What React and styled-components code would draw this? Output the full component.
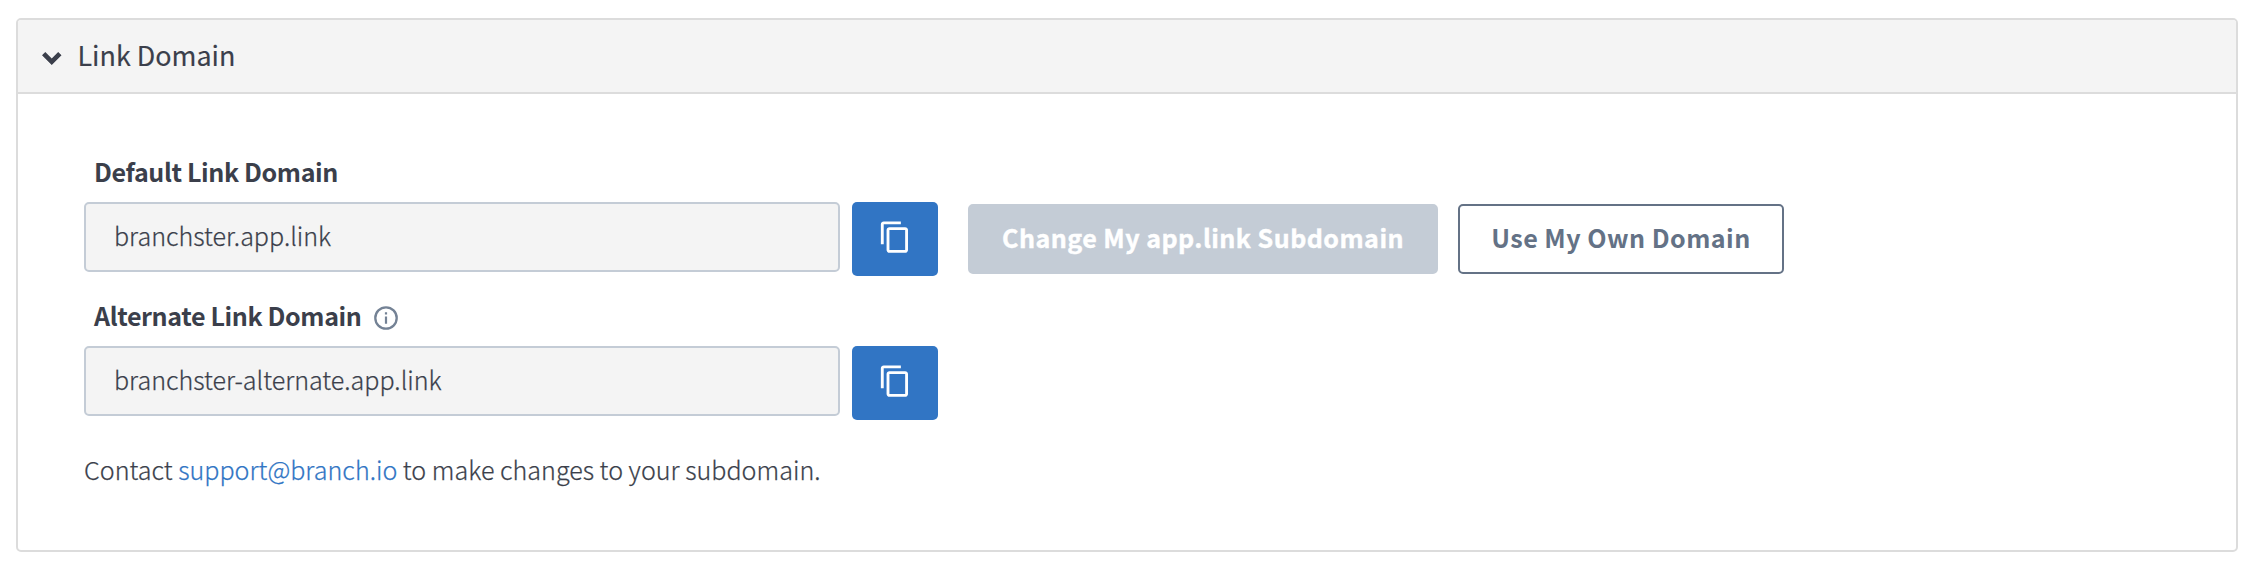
import React from 'react';
import styled, { createGlobalStyle } from 'styled-components';

const GlobalStyle = createGlobalStyle`
  *, *::before, *::after { box-sizing: border-box; }
  body {
    margin: 0;
    background: #fff;
    color: #3b3f4b;
    font-family: "Noto Sans CJK SC", "Noto Sans", sans-serif;
    font-size: 25.07px;
  }
`;

const Page = styled.main`
  padding: 18px 20px 18px 16px;
`;

const Panel = styled.section`
  height: 534px;
  border: 2px solid #dcdcdc;
  border-radius: 5px;
  overflow: hidden;
`;

const PanelHeader = styled.header`
  display: flex;
  align-items: center;
  height: 74px;
  padding: 0 24px;
  border-bottom: 2px solid #dcdcdc;
  background: #f4f4f4;
`;

const Chevron = styled.svg`
  flex: none;
  width: 19.5px;
  height: 13px;
  margin: 5px 16px 0 0;
`;

const PanelTitle = styled.h2`
  margin: 0;
  padding-bottom: 3px;
  font-size: 26.9px;
  font-weight: 400;
  line-height: 40px;
  -webkit-text-stroke: 0.15px currentColor;
`;

const PanelBody = styled.div`
  padding: 46px 66px 0;
`;

const Field = styled.div`
  & + & { padding-top: 8px; }
`;

const FieldLabel = styled.div`
  display: flex;
  align-items: center;
  height: 62px;
  padding-left: 10px;
  font-weight: 700;
  letter-spacing: -0.38px;
  white-space: nowrap;
`;

const InfoIcon = styled.svg`
  flex: none;
  width: 24px;
  height: 24px;
  margin: 6px 0 0 12px;
`;

const FieldRow = styled.div`
  display: flex;
  align-items: flex-start;
  height: 74px;
`;

const DomainBox = styled.div`
  display: flex;
  align-items: center;
  width: 756px;
  height: 70px;
  padding: 0 28px 4px;
  border: 2px solid #c4ccd6;
  border-radius: 5px;
  background: #f4f4f4;
  font-weight: 300;
  -webkit-text-stroke: 0.25px currentColor;
`;

const CopyButton = styled.button`
  display: flex;
  align-items: center;
  justify-content: center;
  width: 86px;
  height: 74px;
  margin-left: 12px;
  padding: 0 0 4px;
  border: 0;
  border-radius: 5px;
  background: #3175c4;
`;

const Actions = styled.div`
  display: flex;
  gap: 20px;
  margin: 2px 0 0 30px;
`;

const ActionButton = styled.button`
  width: ${(p) => p.$width}px;
  height: 70px;
  padding: 0 0 4px;
  border: 2px solid ${(p) => (p.$muted ? '#c4ccd6' : '#647286')};
  border-radius: 5px;
  background: ${(p) => (p.$muted ? '#c4ccd6' : '#fff')};
  color: ${(p) => (p.$muted ? '#fff' : '#647286')};
  font: inherit;
  font-weight: 700;
  letter-spacing: 0.46px;
  white-space: nowrap;
  -webkit-text-stroke: ${(p) => (p.$muted ? '0.4px' : '0')} currentColor;
`;

const Note = styled.p`
  margin: 29px 0 0;
  font-weight: 300;
  line-height: 40px;
  letter-spacing: 0.02px;
  -webkit-text-stroke: 0.25px currentColor;
`;

const MailLink = styled.a`
  color: #3175c4;
  text-decoration: none;
`;

function CopyIcon() {
  return (
    <svg width="34.3" height="34.3" viewBox="0 0 24 24" fill="#fff" aria-hidden="true">
      <path d="M16 1H4c-1.1 0-2 .9-2 2v14h2V3h12V1zm3 4H8c-1.1 0-2 .9-2 2v14c0 1.1.9 2 2 2h11c1.1 0 2-.9 2-2V7c0-1.1-.9-2-2-2zm0 16H8V7h11v14z" />
    </svg>
  );
}

function DomainField({ label, info, value, children }) {
  return (
    <Field>
      <FieldLabel>
        {label}
        {info && (
          <InfoIcon viewBox="0 0 24 24" aria-hidden="true">
            <circle cx="12" cy="12" r="10.7" fill="none" stroke="#748295" strokeWidth="2.3" />
            <path d="M10.9 6.2h2.2v2.2h-2.2zM10.9 10.6h2.2v7.2h-2.2z" fill="#748295" />
          </InfoIcon>
        )}
      </FieldLabel>
      <FieldRow>
        <DomainBox>{value}</DomainBox>
        <CopyButton aria-label={`Copy ${value}`}>
          <CopyIcon />
        </CopyButton>
        {children}
      </FieldRow>
    </Field>
  );
}

export default function App() {
  return (
    <>
      <GlobalStyle />
      <Page>
        <Panel>
          <PanelHeader>
            <Chevron viewBox="0 0 19.5 13" aria-hidden="true">
              <path d="M0 3.3L3.3 0l6.45 6.4L16.2 0l3.3 3.3L9.75 13z" fill="#3b3f4b" />
            </Chevron>
            <PanelTitle>Link Domain</PanelTitle>
          </PanelHeader>
          <PanelBody>
            <DomainField label="Default Link Domain" value="branchster.app.link">
              <Actions>
                <ActionButton $width={470} $muted>Change My app.link Subdomain</ActionButton>
                <ActionButton $width={326}>Use My Own Domain</ActionButton>
              </Actions>
            </DomainField>
            <DomainField label="Alternate Link Domain" info value="branchster-alternate.app.link" />
            <Note>
              Contact <MailLink href="mailto:support@branch.io">support@branch.io</MailLink> to make changes to your subdomain.
            </Note>
          </PanelBody>
        </Panel>
      </Page>
    </>
  );
}
